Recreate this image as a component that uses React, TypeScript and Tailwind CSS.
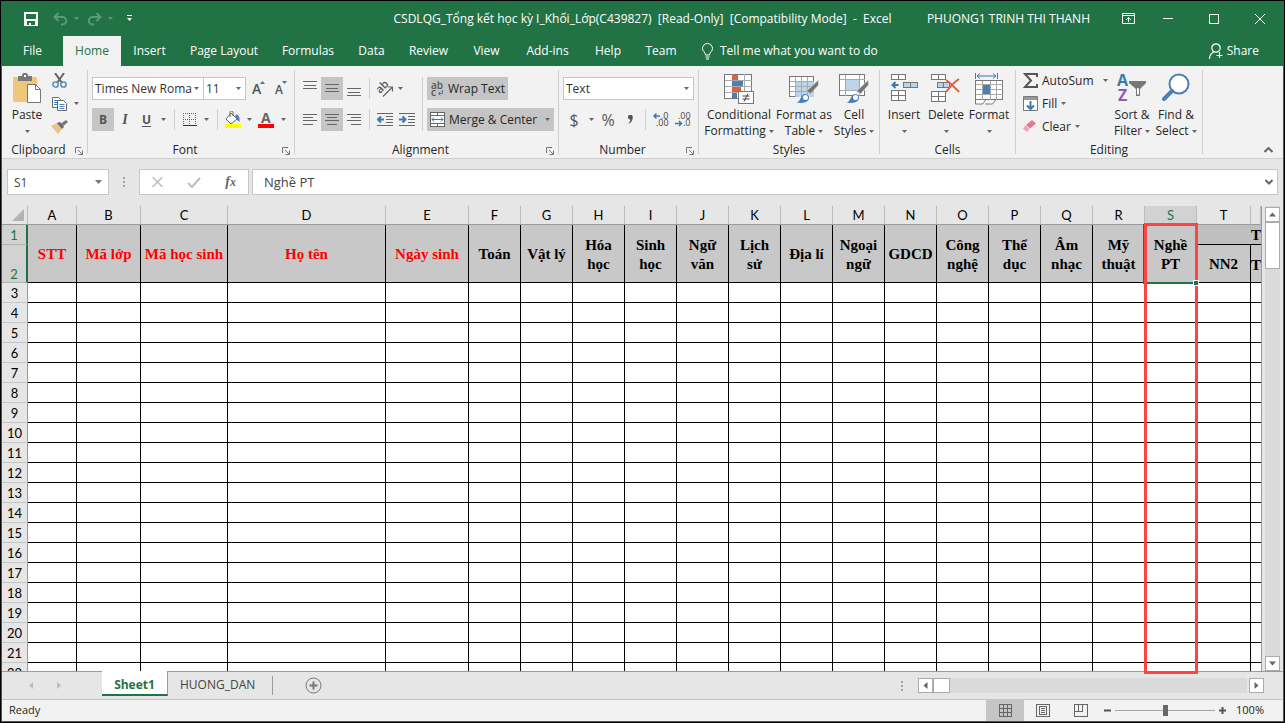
import type { ReactNode } from "react";
import clsx from "clsx";

const TABS = [
  { name: "File", w: "w-[61px]" },
  { name: "Home", w: "w-[58px]" },
  { name: "Insert", w: "w-[57px]" },
  { name: "Page Layout", w: "w-[92px]" },
  { name: "Formulas", w: "w-[76px]" },
  { name: "Data", w: "w-[51px]" },
  { name: "Review", w: "w-[63px]" },
  { name: "View", w: "w-[53px]" },
  { name: "Add-ins", w: "w-[69px]" },
  { name: "Help", w: "w-[52px]" },
  { name: "Team", w: "w-[54px]" },
];

const COLUMNS = [
  { id: "A", title: "STT", w: "w-[49px]", red: true },
  { id: "B", title: "Mã lớp", w: "w-[64px]", red: true },
  { id: "C", title: "Mã học sinh", w: "w-[87px]", red: true },
  { id: "D", title: "Họ tên", w: "w-[158px]", red: true },
  { id: "E", title: "Ngày sinh", w: "w-[83px]", red: true },
  { id: "F", title: "Toán", w: "w-[52px]" },
  { id: "G", title: "Vật lý", w: "w-[52px]" },
  { id: "H", title: "Hóa\nhọc", w: "w-[52px]" },
  { id: "I", title: "Sinh\nhọc", w: "w-[52px]" },
  { id: "J", title: "Ngữ\nvăn", w: "w-[52px]" },
  { id: "K", title: "Lịch\nsử", w: "w-[52px]" },
  { id: "L", title: "Địa lí", w: "w-[52px]" },
  { id: "M", title: "Ngoại\nngữ", w: "w-[52px]" },
  { id: "N", title: "GDCD", w: "w-[52px]" },
  { id: "O", title: "Công\nnghệ", w: "w-[52px]" },
  { id: "P", title: "Thể\ndục", w: "w-[52px]" },
  { id: "Q", title: "Âm\nnhạc", w: "w-[52px]" },
  { id: "R", title: "Mỹ\nthuật", w: "w-[52px]" },
  { id: "S", title: "Nghề\nPT", w: "w-[52px]" },
];

const ROWS = Array.from({ length: 20 }, (_, i) => i + 3);

function Arrow({ className = "text-[#666]" }: { className?: string }) {
  return (
    <svg width="5" height="3" viewBox="0 0 5 3" className={clsx("shrink-0", className)}>
      <path d="M0 0h5L2.500 3z" fill="currentColor" />
    </svg>
  );
}

function ArrowButton({ label }: { label: string }) {
  return (
    <button aria-label={label} className="flex h-[23px] w-3 items-center justify-center">
      <Arrow />
    </button>
  );
}

function IconButton({ label, active, w = "w-[22px]", children }: { label: string; active?: boolean; w?: string; children: ReactNode }) {
  return (
    <button
      aria-label={label}
      title={label}
      className={clsx("flex h-[23px] shrink-0 items-center justify-center text-[#555]", w, active && "bg-[#c5c5c5]")}
    >
      {children}
    </button>
  );
}

function Sep({ className = "mx-[5px]" }: { className?: string }) {
  return <span className={clsx("h-[21px] w-px bg-[#d0d0d0]", className)} />;
}

function Launcher({ label }: { label: string }) {
  return (
    <button aria-label={label} className="mr-1 pt-0.5">
      <svg width="8" height="8" viewBox="0 0 8 8" fill="none" stroke="#777">
        <path d="M.5 6V.5H6M3 3l4 4M7.500 3.500v4h-4" />
      </svg>
    </button>
  );
}

function Group({ name, w, launcher, children }: { name: string; w: string; launcher?: boolean; children: ReactNode }) {
  return (
    <section aria-label={name} className={clsx("flex shrink-0", w)}>
      <div className="flex min-w-0 flex-1 flex-col">
        <div className="flex h-[76px]">{children}</div>
        <div className="flex h-4 items-center">
          <span className="flex-1 text-center">{name}</span>
          {launcher && <Launcher label={`${name} settings`} />}
        </div>
      </div>
      <span className="mt-1 h-[84px] w-px bg-[#d0d0d0]" />
    </section>
  );
}

function Combo({ label, value, w }: { label: string; value: string; w: string }) {
  return (
    <label className={clsx("relative flex h-[23px] shrink-0 items-center border border-[#c6c6c6] bg-white", w)}>
      <select aria-label={label} className="h-full w-full appearance-none bg-transparent pl-0.5 text-[#333] outline-none">
        <option>{value}</option>
      </select>
      <Arrow className="pointer-events-none absolute right-1 text-[#666]" />
    </label>
  );
}

function BigButton({ w, icon, lines }: { w: string; icon: ReactNode; lines: string[] }) {
  return (
    <button className={clsx("flex shrink-0 flex-col items-center pt-[7px] leading-4 whitespace-nowrap", w)}>
      <span className="flex h-[34px] items-start justify-center">{icon}</span>
      <span>{lines[0]}</span>
      <span className="flex h-4 items-center gap-[3px]">
        {lines[1]}
        <Arrow />
      </span>
    </button>
  );
}

function SaveIcon() {
  return (
    <svg width="14" height="14" viewBox="0 0 14 14" fill="#fff" shapeRendering="crispEdges">
      <path fillRule="evenodd" d="M0 0h14v14H0zM2 2v5h10V2zM3 9v4h2v-2h2v2h4V9z" />
    </svg>
  );
}

function UndoIcon({ flip }: { flip?: boolean }) {
  return (
    <svg width="15" height="14" viewBox="0 0 15 14" fill="none" stroke="#5c9a77" strokeWidth="2" className={clsx(flip && "-scale-x-100")}>
      <path d="M5.500 1L1.500 5l4 4M2 5h7.500a3.700 3.700 0 010 7.500H8" />
    </svg>
  );
}

function PasteIcon() {
  return (
    <svg width="29" height="31" viewBox="0 0 29 31">
      <rect x="0" y="4" width="24" height="25" rx="1" fill="#eec77c" />
      <path d="M5 3h4V1.500L10.500 0h3L15 1.500V3h4v5H5z" fill="#777" />
      <rect x="11" y="2" width="2" height="2" fill="#fff" />
      <path d="M14.500 11.500h8l5 5v13h-13z" fill="#fff" stroke="#777" />
      <path d="M22.500 11.500v5h5" fill="none" stroke="#777" />
    </svg>
  );
}

function CutIcon() {
  return (
    <svg width="15" height="15" viewBox="0 0 15 15" fill="none">
      <path d="M3 0l7 10M12 0L5 10" stroke="#666" strokeWidth="2" />
      <circle cx="3.500" cy="11.500" r="2.700" stroke="#4a80b8" strokeWidth="1.300" />
      <circle cx="11.500" cy="11.500" r="2.700" stroke="#4a80b8" strokeWidth="1.300" />
    </svg>
  );
}

function CopyIcon() {
  return (
    <svg width="15" height="14" viewBox="0 0 15 14" fill="#fff" stroke="#666">
      <path d="M.5.5h6l2 2v8h-8z" />
      <path d="M2 3.500h3M2 5.500h3M2 7.500h3" stroke="#4a80b8" />
      <path d="M5.500 3.500h6l3 3v7h-9z" />
      <path d="M7.500 7.500h5M7.500 9.500h5M7.500 11.500h5" stroke="#4a80b8" />
    </svg>
  );
}

function PainterIcon() {
  return (
    <svg width="17" height="14" viewBox="0 0 17 14">
      <path d="M0 6l6-3 5 6-4 5z" fill="#eec08a" />
      <path d="M6 3l3-1 4 5-2 2z" fill="#666" />
      <path d="M10 3.500l5-3.500 2 2-4.500 4z" fill="#777" />
    </svg>
  );
}

function BordersIcon() {
  return (
    <svg width="14" height="13" viewBox="0 0 14 13" fill="none" stroke="#666" shapeRendering="crispEdges">
      <path d="M0 .5h14M0 6.500h14M.5 0v12M6.500 0v12M12.500 0v12" strokeDasharray="1 1" />
      <path d="M0 12.500h14" stroke="#333" />
    </svg>
  );
}

function FillColorIcon() {
  return (
    <svg width="18" height="17" viewBox="0 0 18 17">
      <path d="M7 2l6 6-6 5-5-5z" fill="#fff" stroke="#666" />
      <path d="M6 6V1.500a1.500 1.500 0 013 0V5" fill="none" stroke="#666" />
      <path d="M11 4c3-1 5 1 4.500 7L13 9z" fill="#4a80b8" />
      <rect x="1" y="13" width="16" height="4" fill="#ff0" />
    </svg>
  );
}

function Lines({ y, xs }: { y: number[]; xs: [number, number][] }) {
  return (
    <svg width="14" height="15" viewBox="0 0 14 15" stroke="#666" shapeRendering="crispEdges">
      {y.map((v, i) => (
        <path key={v} d={`M${xs[i][0]} ${v}.5H${xs[i][1]}`} />
      ))}
    </svg>
  );
}

const VLINES: [number, number][] = [[0, 14], [1, 13], [0, 14]];

function OrientationIcon() {
  return (
    <svg width="17" height="16" viewBox="0 0 17 16" fill="none" stroke="#666" className="overflow-visible font-['Open_Sans']">
      <text transform="translate(4 13) rotate(-45)" fontSize="11" fontWeight="600" fill="#555" stroke="none">ab</text>
      <path d="M7 15.500L16 6.500M12 6h4.500v4.500" strokeWidth="1.200" />
    </svg>
  );
}

function IndentIcon({ right }: { right?: boolean }) {
  return (
    <svg width="16" height="13" viewBox="0 0 16 13" stroke="#666">
      <path d="M0 .5h16M9 3.500h7M9 6.500h7M9 9.500h7M0 12.500h16" shapeRendering="crispEdges" />
      <path d={right ? "M0 6.500h6M3.500 3.500l3 3-3 3" : "M7 6.500H1M4 3.500l-3 3 3 3"} fill="none" stroke="#3f77b0" strokeWidth="2" />
    </svg>
  );
}

function WrapIcon() {
  return (
    <svg width="13" height="16" viewBox="0 0 13 16" className="overflow-visible font-['Open_Sans']">
      <text x="0" y="8" fontSize="10" fontWeight="600" fill="#555">ab</text>
      <text x="0" y="15" fontSize="10" fontWeight="600" fill="#555">c</text>
      <path d="M11.500 9v3.500H7.500M9.500 10.500l-2 2 2 2" fill="none" stroke="#3f77b0" />
    </svg>
  );
}

function MergeIcon() {
  return (
    <svg width="15" height="15" viewBox="0 0 15 15" fill="#fff" stroke="#666">
      <path d="M.5.5h14v14H.5zM.5 3.500h14M.5 11.500h14M7.500 0v3.500M7.500 11.500V15" shapeRendering="crispEdges" />
      <path d="M2 7.500h11M4 5.500l-2 2 2 2M11 5.500l2 2-2 2" fill="none" stroke="#3f77b0" />
    </svg>
  );
}

function DecimalIcon({ decrease }: { decrease?: boolean }) {
  return (
    <svg width="16" height="15" viewBox="0 0 16 15" fontSize="9" fill="#444" className="overflow-visible font-['Open_Sans']">
      <text x={decrease ? 3 : 8} y="7">{decrease ? ".00" : ".0"}</text>
      <text x={decrease ? 8 : 3} y="14">{decrease ? ".0" : ".00"}</text>
      <path
        d={decrease ? "M0 11.500h6M4 9l2.500 2.500L4 14" : "M7 4H1M3.500 1.500L1 4l2.500 2.500"}
        fill="none"
        stroke="#3f77b0"
        strokeWidth="1.500"
      />
    </svg>
  );
}

function Brush() {
  return (
    <g>
      <path d="M29.500 7v5l-8 9-4-3z" fill="#777" stroke="#f2f2f2" strokeWidth="0.500" />
      <path d="M7 29.500c5 0 4-8 9-8.500 4 0 5 4 3 6.500-3 3-8 2.500-12 2z" fill="#4a80b8" />
      <circle cx="16.500" cy="24.500" r="2.500" fill="#fff" />
    </g>
  );
}

function ConditionalIcon() {
  return (
    <svg width="30" height="31" viewBox="0 0 30 31">
      <g shapeRendering="crispEdges">
        <path d="M.5 1.500h27v24H.5z" fill="#fff" stroke="#777" />
        <path d="M1 7.500h27M1 13.500h27M1 19.500h27M8.500 1v24M20.500 1v24" stroke="#aaa" fill="none" />
        <path d="M8 2h6v5H8zM8 14h9v5H8z" fill="#d9623f" />
        <path d="M8 8h11v5H8zM8 20h5v5H8z" fill="#4a80b8" />
        <path d="M14.500 18.500h15v12h-15z" fill="#fff" stroke="#777" />
      </g>
      <path d="M18.500 23h7M18.500 26h7M24 20.500l-4 8" stroke="#444" />
    </svg>
  );
}

function FormatTableIcon() {
  return (
    <svg width="30" height="31" viewBox="0 0 30 31">
      <g shapeRendering="crispEdges">
        <path d="M.5 3.500h24v20H.5z" fill="#fff" stroke="#777" />
        <path d="M7 9h18v15H7z" fill="#bdd3ea" />
        <path d="M1 8.500h24M1 13.500h24M1 18.500h24M6.500 4v20M12.500 4v20M18.500 4v20" stroke="#aaa" fill="none" />
      </g>
      <Brush />
    </svg>
  );
}

function CellStylesIcon() {
  return (
    <svg width="30" height="31" viewBox="0 0 30 31">
      <g shapeRendering="crispEdges">
        <path d="M.5 1.500h25v21H.5z" fill="#fff" stroke="#777" />
        <path d="M1 6.500h25M1 17.500h25M6.500 2v21M20.500 2v21" stroke="#aaa" fill="none" />
        <path d="M7 7h13v10H7z" fill="#bdd3ea" />
      </g>
      <Brush />
    </svg>
  );
}

function InsertIcon() {
  return (
    <svg width="27" height="28" viewBox="0 0 27 28" fill="#fff" stroke="#777" shapeRendering="crispEdges">
      <path d="M.5 1.500h14v5H.5zM7.500 1v5M.5 17.500h14v10H.5zM7.500 18v9M1 22.500h14" />
      <path d="M12.500 9.500h14v5h-14zM19.500 10v5" fill="#bdd3ea" />
      <path d="M1.500 12h6M4.500 9l-3 3 3 3" fill="none" stroke="#3f77b0" strokeWidth="2" shapeRendering="auto" />
    </svg>
  );
}

function DeleteIcon() {
  return (
    <svg width="30" height="29" viewBox="0 0 30 29" fill="#fff" stroke="#777">
      <g shapeRendering="crispEdges">
        <path d="M.5 1.500h14v5H.5zM7.500 1v5M.5 18.500h14v10H.5zM7.500 19v9M1 23.500h14" />
        <path d="M6.500 9.500h12v5h-12zM12.500 10v5" fill="#bdd3ea" />
      </g>
      <path d="M15 7c5 3 9 8 13 12M28 6c-5 3-9 8-13 13" fill="none" stroke="#d9623f" strokeWidth="2" />
    </svg>
  );
}

function FormatIcon() {
  return (
    <svg width="28" height="32" viewBox="0 0 28 32" fill="#fff" stroke="#777">
      <path d="M.5 0v6M22.500 0v6M2 3h19M5 .5L2 3l3 2.500M18 .5L21 3l-3 2.500" fill="none" stroke="#3f77b0" />
      <g shapeRendering="crispEdges">
        <path d="M.5 7.500h27v19H.5z" />
        <path d="M1 11.500h27M1 21.500h27M1 16.500h27M7.500 8v19M15.500 8v19M21.500 8v19" stroke="#aaa" fill="none" />
        <path d="M8 12h7v9H8z" fill="#4a80b8" stroke="none" />
      </g>
      <path d="M.5 27v4h7l3-4M10.500 31h7l3-4" />
    </svg>
  );
}

function SortIcon() {
  return (
    <svg width="30" height="30" viewBox="0 0 30 30" fontSize="16" fontWeight="700" className="overflow-visible font-['Open_Sans']">
      <text x="0" y="13" fill="#3f77b0">A</text>
      <text x="1" y="28" fill="#8f5bb0">Z</text>
      <path d="M12 8h17v2l-6 6v7h-4v-7l-7-6z" fill="#777" />
      <path d="M20 15l2 .5v6h-2z" fill="#fff" />
    </svg>
  );
}

function FindIcon() {
  return (
    <svg width="28" height="28" viewBox="0 0 28 28" fill="#fff" stroke="#4a80b8">
      <circle cx="17" cy="11" r="9.500" strokeWidth="2" />
      <path d="M10 18l-8 8" strokeWidth="4" strokeLinecap="round" />
    </svg>
  );
}

function TitleBar() {
  return (
    <header className="grid h-[35px] grid-cols-[1fr_auto_1fr] items-center text-white">
      <div className="flex items-center pl-[22px]">
        <button aria-label="Save"><SaveIcon /></button>
        <button aria-label="Undo" className="ml-[15px] flex items-center gap-1.5">
          <UndoIcon />
          <Arrow className="text-[#5c9a77]" />
        </button>
        <button aria-label="Redo" className="ml-2 flex items-center gap-1.5">
          <UndoIcon flip />
          <Arrow className="text-[#5c9a77]" />
        </button>
        <button aria-label="Customize Quick Access Toolbar" className="ml-3.5">
          <svg width="5" height="7" viewBox="0 0 5 7" fill="#fff"><path d="M0 0h5v1H0zM0 3h5L2.500 6z" /></svg>
        </button>
      </div>
      <h1 className="whitespace-pre">CSDLQG_Tổng kết học kỳ I_Khối_Lớp(C439827)  [Read-Only]  [Compatibility Mode]  -  Excel</h1>
      <div className="flex items-center justify-end pr-[18px] whitespace-nowrap">
        <span>PHUONG1 TRINH THI THANH</span>
        <button aria-label="Ribbon display options" className="ml-8">
          <svg width="13" height="11" viewBox="0 0 13 11" fill="none" stroke="#fff"><path d="M.5.5h12v10H.5zM.5 2.500h12M6.500 9V4.500M4 7l2.500-2.500L9 7" /></svg>
        </button>
        <button aria-label="Minimize" className="ml-7">
          <svg width="10" height="10" viewBox="0 0 10 10" stroke="#fff"><path d="M0 4.500h10" /></svg>
        </button>
        <button aria-label="Maximize" className="ml-9">
          <svg width="10" height="10" viewBox="0 0 10 10" fill="none" stroke="#fff"><path d="M.5.5h9v9h-9z" /></svg>
        </button>
        <button aria-label="Close" className="ml-9">
          <svg width="10" height="10" viewBox="0 0 10 10" stroke="#fff"><path d="M0 0l10 10M10 0L0 10" /></svg>
        </button>
      </div>
    </header>
  );
}

function TabBar() {
  return (
    <nav className="flex h-[30px] items-stretch text-white">
      {TABS.map((t) => (
        <button
          key={t.name}
          className={clsx("shrink-0 text-center whitespace-nowrap", t.w, t.name === "Home" && "bg-[#f2f2f2] text-[#217346]")}
        >
          {t.name}
        </button>
      ))}
      <button className="ml-3.5 flex items-center gap-[7px] font-medium whitespace-nowrap">
        <svg width="11" height="17" viewBox="0 0 11 17" fill="none" stroke="#fff">
          <path d="M3.500 12c0-3-3-3.500-3-6.500a5 5 0 0110 0c0 3-3 3.500-3 6.500zM3.500 14h4M4 16h3" />
        </svg>
        Tell me what you want to do
      </button>
      <button className="mr-6 ml-auto flex items-center gap-1">
        <svg width="14" height="16" viewBox="0 0 14 16" fill="none" stroke="#fff" strokeWidth="1.200">
          <circle cx="7" cy="5" r="4.200" />
          <path d="M.5 16c0-4 2-6 4.500-7M10.500 9v6M7.500 12.500h6" />
        </svg>
        Share
      </button>
    </nav>
  );
}

function Ribbon() {
  return (
    <div className="flex h-[93px] overflow-hidden border-b border-[#d0d0d0] bg-[#f2f2f2]">
      <Group name="Clipboard" w="w-[86px]" launcher>
        <div className="pl-1"><BigButton w="w-[42px]" icon={<PasteIcon />} lines={["Paste", ""]} /></div>
        <div className="flex flex-col pt-[3px]">
          <IconButton label="Cut"><CutIcon /></IconButton>
          <div className="flex">
            <IconButton label="Copy"><CopyIcon /></IconButton>
            <ArrowButton label="Copy options" />
          </div>
          <IconButton label="Format Painter"><PainterIcon /></IconButton>
        </div>
      </Group>

      <Group name="Font" w="w-[207px]" launcher>
        <div className="flex flex-col gap-2 pt-[11px] pl-1">
          <div className="flex">
            <Combo label="Font" value="Times New Roma" w="w-[112px]" />
            <div className="-ml-px"><Combo label="Font size" value="11" w="w-[43px]" /></div>
            <div className="flex pl-0.5">
              <IconButton label="Increase Font Size">
                <svg width="14" height="16" viewBox="0 0 14 16" className="overflow-visible font-['Open_Sans']">
                  <text x="0" y="13" fontSize="14" fontWeight="600" fill="#555">A</text>
                  <path d="M8 3l2.500-3L13 3z" fill="#3f77b0" />
                </svg>
              </IconButton>
              <IconButton label="Decrease Font Size">
                <svg width="14" height="16" viewBox="0 0 14 16" className="overflow-visible font-['Open_Sans']">
                  <text x="1" y="13" fontSize="12" fontWeight="600" fill="#555">A</text>
                  <path d="M8 0h5l-2.500 3z" fill="#3f77b0" />
                </svg>
              </IconButton>
            </div>
          </div>
          <div className="flex items-center">
            <IconButton label="Bold" active><b>B</b></IconButton>
            <IconButton label="Italic"><i className="font-['Liberation_Serif'] text-sm font-bold">I</i></IconButton>
            <IconButton label="Underline" w="w-[21px]"><b className="underline underline-offset-2">U</b></IconButton>
            <ArrowButton label="Underline options" />
            <Sep />
            <IconButton label="Borders" w="w-5"><BordersIcon /></IconButton>
            <ArrowButton label="Border options" />
            <Sep />
            <IconButton label="Fill Color" w="w-5"><FillColorIcon /></IconButton>
            <ArrowButton label="Fill colors" />
            <IconButton label="Font Color">
              <svg width="16" height="17" viewBox="0 0 16 17" className="overflow-visible font-['Open_Sans']">
                <text x="3" y="12" fontSize="14" fontWeight="700" fill="#666">A</text>
                <rect y="13" width="16" height="4" fill="#f00" />
              </svg>
            </IconButton>
            <ArrowButton label="Font colors" />
          </div>
        </div>
      </Group>

      <Group name="Alignment" w="w-[264px]" launcher>
        <div className="flex pt-[11px] pl-1">
          <div className="flex flex-col gap-2">
            <div className="flex items-center">
              <IconButton label="Top Align"><Lines y={[0, 4, 7]} xs={VLINES} /></IconButton>
              <IconButton label="Middle Align" active><Lines y={[3, 7, 10]} xs={VLINES} /></IconButton>
              <IconButton label="Bottom Align"><Lines y={[7, 11, 14]} xs={VLINES} /></IconButton>
              <Sep className="mx-1" />
              <IconButton label="Orientation" w="w-5"><OrientationIcon /></IconButton>
              <ArrowButton label="Orientation options" />
            </div>
            <div className="flex items-center">
              <IconButton label="Align Left"><Lines y={[2, 5, 8, 12]} xs={[[0, 14], [0, 10], [0, 14], [0, 10]]} /></IconButton>
              <IconButton label="Center" active><Lines y={[2, 5, 8, 12]} xs={[[0, 14], [2, 12], [0, 14], [2, 12]]} /></IconButton>
              <IconButton label="Align Right"><Lines y={[2, 5, 8, 12]} xs={[[0, 14], [4, 14], [0, 14], [4, 14]]} /></IconButton>
              <Sep className="mx-1" />
              <IconButton label="Decrease Indent"><IndentIcon /></IconButton>
              <IconButton label="Increase Indent"><IndentIcon right /></IconButton>
            </div>
          </div>
          <span className="mx-1 h-[54px] w-px bg-[#d0d0d0]" />
          <div className="flex flex-col items-start gap-2">
            <button className="flex h-[23px] w-[81px] items-center gap-1 bg-[#c5c5c5] pl-1 whitespace-nowrap"><WrapIcon />Wrap Text</button>
            <button className="flex h-[23px] w-[127px] items-center gap-1 bg-[#c5c5c5] pr-1 pl-[3px] whitespace-nowrap">
              <MergeIcon />
              Merge &amp; Center
              <span className="ml-auto"><Arrow /></span>
            </button>
          </div>
        </div>
      </Group>

      <Group name="Number" w="w-[140px]" launcher>
        <div className="flex flex-col gap-2 pt-[11px] pl-1">
          <Combo label="Number format" value="Text" w="w-[131px]" />
          <div className="flex items-center">
            <IconButton label="Accounting Number Format"><span className="text-base">$</span></IconButton>
            <ArrowButton label="Currencies" />
            <IconButton label="Percent Style"><span className="text-base">%</span></IconButton>
            <IconButton label="Comma Style">
              <svg width="5" height="9" viewBox="0 0 5 9" fill="#555"><path d="M0 2.200a2.200 2.200 0 014.800 0C4.800 5.500 3 8 .8 8.500L.5 7.800C2 7 2.500 5.500 2.300 4.500A2.200 2.200 0 010 2.200z" /></svg>
            </IconButton>
            <Sep className="mx-1" />
            <IconButton label="Increase Decimal"><DecimalIcon /></IconButton>
            <IconButton label="Decrease Decimal"><DecimalIcon decrease /></IconButton>
          </div>
        </div>
      </Group>

      <Group name="Styles" w="w-[181px]">
        <div className="flex pl-[3px]">
          <BigButton w="w-[74px]" icon={<ConditionalIcon />} lines={["Conditional", "Formatting"]} />
          <BigButton w="w-[56px]" icon={<FormatTableIcon />} lines={["Format as", "Table"]} />
          <BigButton w="w-[44px]" icon={<CellStylesIcon />} lines={["Cell", "Styles"]} />
        </div>
      </Group>

      <Group name="Cells" w="w-[136px]">
        <div className="flex pl-0.5">
          <BigButton w="w-[44px]" icon={<InsertIcon />} lines={["Insert", ""]} />
          <BigButton w="w-[40px]" icon={<DeleteIcon />} lines={["Delete", ""]} />
          <BigButton w="w-[46px]" icon={<FormatIcon />} lines={["Format", ""]} />
        </div>
      </Group>

      <Group name="Editing" w="w-[187px]">
        <div className="flex w-[94px] flex-col pt-[3px] pl-[7px]">
          <button className="flex h-[23px] items-center gap-[3px]">
            <svg width="16" height="15" viewBox="0 0 16 15" fill="none" stroke="#555" strokeWidth="2"><path d="M14 4V1H2l6 6.500L2 14h12v-3" /></svg>
            AutoSum
            <span className="ml-auto pr-0.5"><Arrow /></span>
          </button>
          <button className="flex h-[23px] items-center gap-1">
            <svg width="15" height="15" viewBox="0 0 15 15" fill="#fff" stroke="#777">
              <path d="M.5.5h14v14H.5z" />
              <path d="M1 1h13v3H1z" fill="#999" stroke="none" />
              <path d="M7.500 5v8M4 9.500L7.500 13 11 9.500" fill="none" stroke="#3f77b0" strokeWidth="2" />
            </svg>
            Fill
            <Arrow />
          </button>
          <button className="flex h-[23px] items-center gap-1">
            <svg width="15" height="13" viewBox="0 0 15 13"><path d="M9 0l4 3.500-6 5L3 5z" fill="#e8798f" /><path d="M2.500 5.500L6.500 9 4 12 0 8.500z" fill="#f0a0b0" /></svg>
            Clear
            <Arrow />
          </button>
        </div>
        <BigButton w="w-[44px]" icon={<SortIcon />} lines={["Sort &", "Filter"]} />
        <BigButton w="w-[44px]" icon={<FindIcon />} lines={["Find &", "Select"]} />
      </Group>

      <button aria-label="Collapse the Ribbon" className="mr-2.5 mb-[5px] ml-auto self-end">
        <svg width="9" height="6" viewBox="0 0 9 6" fill="none" stroke="#666" strokeWidth="2"><path d="M.5 5l4-4 4 4" /></svg>
      </button>
    </div>
  );
}

function Dots() {
  return (
    <svg width="2" height="10" viewBox="0 0 2 10" fill="#a5a5a5"><path d="M0 0h2v2H0zM0 4h2v2H0zM0 8h2v2H0z" /></svg>
  );
}

function FormulaBar() {
  return (
    <div className="flex h-[47px] items-center pr-[5px] pb-px pl-[5px] text-[13px] text-[#444]">
      <label className="relative flex h-[26px] w-[102px] items-center border border-[#c6c6c6] bg-white">
        <input aria-label="Name Box" defaultValue="S1" className="h-full w-full px-1.5 text-xs outline-none" />
        <svg width="7" height="4" viewBox="0 0 7 4" className="absolute right-1.5"><path d="M0 0h7L3.500 4z" fill="#777" /></svg>
      </label>
      <span className="flex w-[30px] justify-center"><Dots /></span>
      <div className="flex h-[26px] w-[110px] items-center justify-around border border-[#c6c6c6] bg-white">
        <button aria-label="Cancel">
          <svg width="11" height="10" viewBox="0 0 11 10" stroke="#bdbdbd" strokeWidth="1.500"><path d="M.5 0l10 10M10.500 0l-10 10" /></svg>
        </button>
        <button aria-label="Enter">
          <svg width="14" height="11" viewBox="0 0 14 11" fill="none" stroke="#bdbdbd" strokeWidth="2"><path d="M1 6l4 4 8-9" /></svg>
        </button>
        <button className="font-['Liberation_Serif'] text-sm leading-none font-bold text-[#666] italic">
          f<span className="text-xs">x</span>
        </button>
      </div>
      <label className="ml-[3px] flex h-[26px] flex-1 items-center border border-[#c6c6c6] bg-white pr-1">
        <input aria-label="Formula Bar" defaultValue="Nghề PT" className="h-full min-w-0 flex-1 pl-[11px] text-[13px] outline-none" />
        <svg width="8" height="6" viewBox="0 0 8 6" fill="none" stroke="#666" strokeWidth="2"><path d="M.5 1L4 4.500 7.500 1" /></svg>
      </label>
    </div>
  );
}

function Sheet() {
  const head = "border-r border-b border-r-[#bcbcbc] border-b-[#9b9b9b] p-0 font-normal";
  const rowHead = "border-r border-b border-r-[#9b9b9b] border-b-[#c5c5c5] p-0 text-center font-normal";
  const title = "border-r border-b border-black bg-[#c8c8c8] p-0 pt-0.5 text-center font-['Liberation_Serif'] text-[15px] leading-[19px] font-bold whitespace-pre";
  return (
    <div className="min-w-0 flex-1 overflow-hidden border-r border-[#9b9b9b]">
      <table className="w-full table-fixed border-separate border-spacing-0 font-['Lato'] text-[13px] leading-4 text-black">
        <colgroup>
          <col className="w-[26px]" />
          {COLUMNS.map((c) => (
            <col key={c.id} className={c.w} />
          ))}
          <col className="w-[54px]" />
          <col />
        </colgroup>
        <thead>
          <tr className="h-[19px]">
            <th className={head} aria-label="Select all">
              <svg width="12" height="12" viewBox="0 0 12 12" className="ml-auto mr-[3px]"><path d="M12 0v12H0z" fill="#b2b2b2" /></svg>
            </th>
            {[...COLUMNS.map((c) => c.id), "T"].map((id) => (
              <th key={id} className={clsx(head, id === "S" && "bg-[#d2d2d2] text-[#217346]")}>{id}</th>
            ))}
            <th className={head} />
          </tr>
        </thead>
        <tbody>
          <tr className="h-5">
            <th className="border-r-2 border-b border-r-[#217346] border-b-[#b0b0b0] bg-[#d2d2d2] p-0 text-center font-normal text-[#217346]">1</th>
            {COLUMNS.map((c) => (
              <td key={c.id} rowSpan={2} className={clsx(title, c.red && "text-[#f00]", c.id === "S" && "relative")}>
                {c.title}
                {c.id === "S" && (
                  <span className="absolute -inset-x-0.5 -top-px -bottom-0.5 border-2 border-[#217346]">
                    <span className="absolute -right-[3px] -bottom-1 z-10 size-[6px] border border-white bg-[#217346]" />
                  </span>
                )}
              </td>
            ))}
            <td colSpan={2} className="border-b border-black bg-[#bfbfbf] p-0 text-right font-['Liberation_Serif'] text-[15px] font-bold">T</td>
          </tr>
          <tr className="h-[38px]">
            <th className="border-r-2 border-b border-r-[#217346] border-b-[#b0b0b0] bg-[#d2d2d2] p-0 text-center align-bottom font-normal text-[#217346]">2</th>
            <td className={title}>NN2</td>
            <td className="border-b border-black bg-[#c8c8c8] p-0 pt-0.5 text-center font-['Liberation_Serif'] text-[15px] font-bold">T</td>
          </tr>
          {ROWS.map((n) => (
            <tr key={n} className="h-5">
              <th className={rowHead}>{n}</th>
              {[...COLUMNS.map((c) => c.id), "T", "U"].map((id) => (
                <td key={id} className={clsx("border-b border-black bg-white p-0", id !== "U" && "border-r")} />
              ))}
            </tr>
          ))}
        </tbody>
      </table>
    </div>
  );
}

function ScrollButton({ label, d }: { label: string; d: string }) {
  return (
    <button aria-label={label} className="flex size-[15px] shrink-0 items-center justify-center border border-[#ababab] bg-white">
      <svg width="7" height="7" viewBox="0 0 7 7" fill="#666"><path d={d} /></svg>
    </button>
  );
}

function SheetTabs() {
  return (
    <div className="flex h-7 shrink-0 items-start border-t border-[#9b9b9b]">
      <div className="flex w-[100px] items-center gap-6 self-center pl-[27px]">
        <button aria-label="Previous sheet"><svg width="4" height="7" viewBox="0 0 4 7" fill="#bdbdbd"><path d="M4 0v7L0 3.500z" /></svg></button>
        <button aria-label="Next sheet"><svg width="4" height="7" viewBox="0 0 4 7" fill="#bdbdbd"><path d="M0 0v7l4-3.500z" /></svg></button>
      </div>
      <button className="-mt-px h-[25px] w-[66px] border-r border-b-2 border-r-[#9b9b9b] border-b-[#217346] bg-white pt-1 font-bold text-[#217346]">Sheet1</button>
      <button className="h-[26px] pr-[17px] pl-3 text-[#444]">HUONG_DAN</button>
      <span className="mt-1 h-[19px] w-px bg-[#9b9b9b]" />
      <button aria-label="New sheet" className="ml-8 self-center">
        <svg width="17" height="17" viewBox="0 0 17 17" fill="none" stroke="#777"><circle cx="8.500" cy="8.500" r="7.500" /><path d="M8.500 4.500v8M4.500 8.500h8" strokeWidth="2" /></svg>
      </button>
      <div className="mt-1.5 mr-[19px] ml-auto flex h-[15px] items-center">
        <span className="mr-[15px]"><Dots /></span>
        <ScrollButton label="Scroll left" d="M5.500 0v7L1.500 3.500z" />
        <div className="mr-0.5 flex h-[15px] w-[314px] bg-[#dadada]">
          <span className="w-[17px] border border-[#ababab] bg-white" />
        </div>
        <ScrollButton label="Scroll right" d="M1.500 0v7l4-3.500z" />
      </div>
    </div>
  );
}

function StatusBar() {
  return (
    <footer className="flex h-[22px] shrink-0 items-stretch border-t border-[#c6c6c6] bg-[#f2f2f2] pr-[19px] pl-[7px] text-[11px]">
      <span className="self-center">Ready</span>
      <button aria-label="Normal view" className="ml-auto flex w-[38px] items-center justify-center bg-[#c5c5c5]">
        <svg width="13" height="13" viewBox="0 0 13 13" fill="none" stroke="#666" shapeRendering="crispEdges"><path d="M.5.5h12v12H.5zM4.500 0v13M8.500 0v13M0 4.500h13M0 8.500h13" /></svg>
      </button>
      <button aria-label="Page Layout view" className="flex w-[38px] items-center justify-center">
        <svg width="14" height="13" viewBox="0 0 14 13" fill="none" stroke="#666" shapeRendering="crispEdges"><path d="M.5.5h13v12H.5zM3.500 2.500h7v8h-7zM5 4.500h4M5 6.500h4M5 8.500h4" /></svg>
      </button>
      <button aria-label="Page Break preview" className="flex w-[38px] items-center justify-center">
        <svg width="14" height="13" viewBox="0 0 14 13" fill="none" stroke="#666" shapeRendering="crispEdges"><path d="M.5.5h13v12H.5zM4.500 0v7M8.500 0v7M0 7.500h9" /></svg>
      </button>
      <button aria-label="Zoom out" className="ml-1"><svg width="7" height="7" viewBox="0 0 7 7" fill="#555"><path d="M0 2.500h7v2H0z" /></svg></button>
      <input
        type="range"
        aria-label="Zoom"
        defaultValue={50}
        className="mx-1 h-[21px] w-[100px] appearance-none bg-transparent [&::-webkit-slider-runnable-track]:h-px [&::-webkit-slider-runnable-track]:bg-[#a5a5a5] [&::-webkit-slider-thumb]:-mt-[5px] [&::-webkit-slider-thumb]:h-[11px] [&::-webkit-slider-thumb]:w-[5px] [&::-webkit-slider-thumb]:appearance-none [&::-webkit-slider-thumb]:bg-[#666]"
      />
      <button aria-label="Zoom in"><svg width="7" height="7" viewBox="0 0 7 7" fill="#555"><path d="M0 2.500h2.500V0h2v2.500H7v2H4.500V7h-2V4.500H0z" /></svg></button>
      <button className="w-[38px] text-right">100%</button>
    </footer>
  );
}

export default function App() {
  return (
    <div className="h-screen border border-black font-['Open_Sans',sans-serif] text-xs text-[#262626]">
      <div className="flex h-full flex-col border border-t-0 border-[#217346] bg-[#e6e6e6]">
        <div className="shrink-0 bg-[#217346]">
          <TitleBar />
          <TabBar />
        </div>
        <div className="shrink-0">
          <Ribbon />
          <FormulaBar />
        </div>
        <main className="relative flex min-h-0 flex-1">
          <Sheet />
          <div className="mr-[3px] ml-[3px] flex w-[15px] flex-col bg-[#dadada] pt-px">
            <ScrollButton label="Scroll up" d="M0 5.500h7L3.500 1.500z" />
            <span className="h-[47px] border border-[#ababab] bg-white" />
            <span className="flex-1" />
            <ScrollButton label="Scroll down" d="M0 1.500h7L3.500 5.500z" />
          </div>
          {/* marker round the vocational-training column */}
          <div className="pointer-events-none absolute top-[17px] -bottom-[3px] left-[1142px] w-[54px] border-3 border-[#fa4545]" />
        </main>
        <SheetTabs />
        <StatusBar />
      </div>
    </div>
  );
}
